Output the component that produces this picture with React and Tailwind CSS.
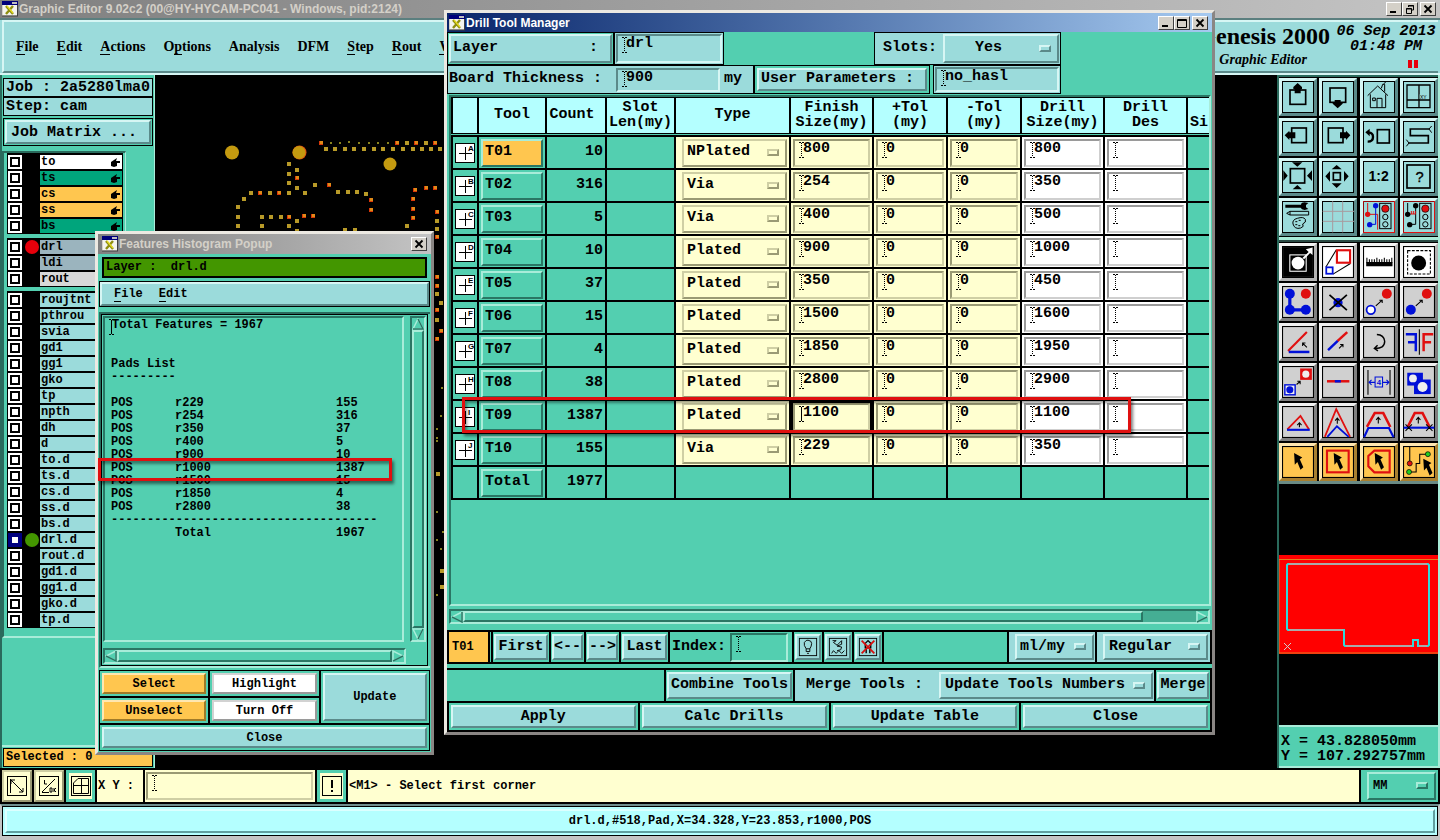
import React from "react";

const MONO = "font-['Liberation_Mono','DejaVu_Sans_Mono',monospace] font-bold";
const SANS = "font-['Liberation_Sans',sans-serif] font-bold";

const UP_BLUE =
  "bg-[#9bdbdb] border-2 border-t-[#d6f6f4] border-l-[#d6f6f4] border-b-[#5b8a8a] border-r-[#5b8a8a]";
const DOWN_BLUE =
  "bg-[#9bdbdb] border-2 border-t-[#5b8a8a] border-l-[#5b8a8a] border-b-[#d6f6f4] border-r-[#d6f6f4]";
const UP_GREEN =
  "bg-[#53cfb0] border-2 border-t-[#a9ecd9] border-l-[#a9ecd9] border-b-[#2a7664] border-r-[#2a7664]";
const DOWN_GREEN =
  "bg-[#53cfb0] border-2 border-t-[#2a7664] border-l-[#2a7664] border-b-[#a9ecd9] border-r-[#a9ecd9]";
const UP_ORANGE =
  "bg-[#ffc64f] border-2 border-t-[#ffe7b0] border-l-[#ffe7b0] border-b-[#a07a28] border-r-[#a07a28]";
const UP_WHITE =
  "bg-white border-2 border-t-[#d2d2d2] border-l-[#d2d2d2] border-b-[#9a9a9a] border-r-[#9a9a9a]";
const UP_CREAM =
  "bg-[#ffffd0] border-2 border-t-[#cfcfa4] border-l-[#cfcfa4] border-b-[#9a9a74] border-r-[#9a9a74]";
const DOWN_CREAM =
  "bg-[#ffffd0] border-2 border-t-[#9a9a74] border-l-[#9a9a74] border-b-[#cfcfa4] border-r-[#cfcfa4]";
const DOWN_WHITE =
  "bg-white border-2 border-t-[#9a9a9a] border-l-[#9a9a9a] border-b-[#cfcfcf] border-r-[#cfcfcf]";

function WinIcon() {
  return (
    <svg width="16" height="16" viewBox="0 0 16 16" className="shrink-0">
      <rect x="0" y="0" width="16" height="15" fill="#d4d0c8" />
      <rect x="0" y="0" width="16" height="4" fill="#00007b" />
      <rect x="10" y="1" width="5" height="2" fill="#c0c0c0" />
      <rect x="1" y="4" width="14" height="10" fill="#f4f4ee" />
      <path d="M4 5L11 13M11 5L4 13" stroke="#8f8f10" strokeWidth="2.4" />
      <path d="M5 5L11 12" stroke="#e8dc20" strokeWidth="1.2" />
      <path d="M0 15H16M15.500 4V15" stroke="#404040" />
    </svg>
  );
}

function WinButton({ label, children }) {
  return (
    <button
      aria-label={label}
      className="flex h-[14px] w-4 items-center justify-center border border-t-white border-l-white border-b-[#404040] border-r-[#404040] bg-[#d4d0c8]"
    >
      <svg width="12" height="10" viewBox="0 0 12 10" fill="none" stroke="#000">
        {children}
      </svg>
    </button>
  );
}
const MinGlyph = <path d="M2 8H8" strokeWidth="2" />;
const MaxGlyph = <path d="M1.500 1.500H10.500V9.500H1.500ZM1 2.500H11" />;
const RestoreGlyph = <path d="M4.500 3V1.500H9.500V6H7.500M4 2H10M2.500 4.500H7.500V9.500H2.500ZM2 5H8" />;
const CloseGlyph = <path d="M2.500 1.500L9.500 8.500M9.500 1.500L2.500 8.500" strokeWidth="1.800" />;

function Caret({ solid }) {
  return (
    <svg width="5" height="16" viewBox="0 0 5 16" className="pointer-events-none absolute left-1 top-px" fill="none" stroke="#000">
      <path d="M0 0.500H2M3 0.500H5M0 15.500H2M3 15.500H5" />
      <path d="M2.500 1V15" strokeDasharray={solid ? undefined : "1 1"} />
    </svg>
  );
}

function Field({ label, value, look, className, solid, size = "text-[15px]" }) {
  return (
    <div className={`relative ${look} ${className}`}>
      <input
        aria-label={label}
        defaultValue={value}
        className={`block h-4 w-full bg-transparent pl-2 leading-4 outline-none ${size}`}
      />
      <Caret solid={solid} />
    </div>
  );
}

function Drop({ label, value, look, className, mark, text = "text-[15px]", pad = "pl-1" }) {
  return (
    <div className={`relative ${look} ${className}`}>
      <select aria-label={label} defaultValue={value} className={`h-full w-full appearance-none bg-transparent outline-none ${text} ${pad}`}>
        <option>{value}</option>
      </select>
      <span className={`pointer-events-none absolute right-1.5 top-1/2 -mt-1 h-[7px] w-3 border-2 ${mark}`} />
    </div>
  );
}
const MARK_BLUE = "border-t-[#d6f6f4] border-l-[#d6f6f4] border-b-[#5b8a8a] border-r-[#5b8a8a] bg-[#9bdbdb]";
const MARK_GREEN = "border-t-[#a9ecd9] border-l-[#a9ecd9] border-b-[#2a7664] border-r-[#2a7664]";
const MARK_CREAM = "border-t-[#cfcfa4] border-l-[#cfcfa4] border-b-[#9a9a74] border-r-[#9a9a74]";

/* ---------- main menu ---------- */
const MENU = [
  ["", "F", "ile"],
  ["", "E", "dit"],
  ["", "A", "ctions"],
  ["O", "p", "tions"],
  ["Analysis", "", ""],
  ["DFM", "", ""],
  ["", "S", "tep"],
  ["", "R", "out"],
  ["", "W", ""],
];

function MenuLabel({ parts }) {
  return (
    <>
      {parts[0]}
      <span className="border-b border-black">{parts[1]}</span>
      {parts[2]}
    </>
  );
}

function MainHeader() {
  return (
    <header>
      <div className="flex h-[18px] items-center bg-linear-to-r from-[#808080] to-[#c4c4c4] pl-0.5 pr-1">
        <WinIcon />
        <h1 className={`${SANS} ml-px flex-1 text-[12px] leading-4 text-[#d4d0c8]`}>
          Graphic Editor 9.02c2 (00@HY-HYCAM-PC041 - Windows, pid:2124)
        </h1>
        <div className="flex">
          <WinButton label="Minimize">{MinGlyph}</WinButton>
          <WinButton label="Restore">{RestoreGlyph}</WinButton>
          <span className="w-0.5" />
          <WinButton label="Close">{CloseGlyph}</WinButton>
        </div>
      </div>
      <div className="border-t-2 border-t-[#5b7f7f] border-b-2 border-b-[#d6f6f4] bg-[#9bdbdb] px-0.5">
        <div className="flex h-[53px] border-t-2 border-l-2 border-t-[#d6f6f4] border-l-[#d6f6f4] border-b-2 border-b-[#5b8a8a]">
          <nav className="flex items-center gap-[18px] pl-3 font-['Liberation_Serif',serif] text-[14px] font-bold leading-4">
            {MENU.map((m) => (
              <button key={m.join("")}>
                <MenuLabel parts={m} />
              </button>
            ))}
          </nav>
          <div className="ml-auto flex">
            <div className="whitespace-nowrap font-['Liberation_Serif',serif] font-bold">
              <p className="text-right text-[24px] leading-[28px]">Genesis 2000</p>
              <p className="pl-[22px] text-[14px] italic leading-5">Graphic Editor</p>
            </div>
            <div className={`${MONO} ml-1 w-[104px] pt-0.5 text-center text-[15px] italic leading-[15px]`}>
              <p>06 Sep 2013</p>
              <p>01:48 PM</p>
              <div className="mt-1.5 flex justify-end gap-0.5 pr-5">
                <span className="h-2 w-1 bg-red-600" />
                <span className="h-2 w-1 bg-red-600" />
              </div>
            </div>
          </div>
        </div>
      </div>
    </header>
  );
}

/* ---------- layer list ---------- */
const LAYER_GROUPS = [
  [
    ["to", "bg-white"],
    ["ts", "bg-[#00a57c]"],
    ["cs", "bg-[#ffc64f]"],
    ["ss", "bg-[#ffc64f]"],
    ["bs", "bg-[#00a57c]"],
  ],
  [
    ["drl", "bg-[#9bb4be]", "bg-red-600"],
    ["ldi", "bg-[#9bb4be]"],
    ["rout", "bg-[#d8d8d8]"],
  ],
  ["roujtnt", "pthrou", "svia", "gd1", "gg1", "gko", "tp", "npth", "dh", "d", "to.d", "ts.d", "cs.d", "ss.d", "bs.d", "drl.d", "rout.d", "gd1.d", "gg1.d", "gko.d", "tp.d"].map(
    (n) => [n, "bg-[#9bdbdb]", n === "drl.d" ? "bg-[#439600]" : undefined]
  ),
];

function Hand() {
  return (
    <svg width="9" height="9" viewBox="0 0 9 9" className="mr-0.5">
      <path d="M0 4L3 2L6 0L5 3H9V5H6V8L3 9L0 8Z" fill="#000" />
    </svg>
  );
}

function LeftPanel() {
  return (
    <aside className={`${MONO} flex w-[155px] flex-col border-l-2 border-r border-l-[#2a6a5c] border-r-[#a9ecd9] bg-[#53cfb0]`}>
      <div className="p-px pt-[3px] text-[15px] leading-[17px]">
        <p className="h-[19px] overflow-hidden border border-black bg-[#9bdbdb] pl-0.5 whitespace-nowrap">Job : 2a5280lma0</p>
        <p className="h-[19px] border border-black bg-[#9bdbdb] pl-0.5">Step: cam</p>
        <div className="mt-0.5 border border-black p-px">
          <button className={`${UP_BLUE} block h-6 w-full pl-1 text-left`}>Job Matrix ...</button>
        </div>
      </div>
      <div className="mt-1 mr-7 border-2 border-r border-t-[#2a6a5c] border-l-[#2a6a5c] border-b-[#a9ecd9] border-r-[#a9ecd9] pb-2">
        <div className="ml-[3px] mr-0.5 flex flex-col gap-1 text-[12px] leading-[14px]">
          {LAYER_GROUPS.map((g, i) => (
            <div key={i} className="border border-b-0 border-black bg-black">
              {g.map(([name, color, dot]) => (
                <label key={name} className="flex h-4 items-center gap-[3px]">
                  <input
                    type="checkbox"
                    className={`h-[14px] w-[14px] shrink-0 appearance-none border-2 bg-white outline-2 -outline-offset-4 ${name === "drl.d" ? "border-[#000080] outline-[#000080]" : "border-white outline-black"}`}
                  />
                  <span className={`h-[14px] w-[14px] shrink-0 rounded-full ${dot || ""}`} />
                  <span className={`-ml-0.5 flex h-[14px] min-w-0 flex-1 items-center justify-between overflow-hidden pl-px ${color}`}>
                    {name}
                    {i === 0 && <Hand />}
                  </span>
                </label>
              ))}
            </div>
          ))}
        </div>
      </div>
      <div className="flex-1 border-b-2 border-b-[#a9ecd9]" />
      <div className="p-px">
        <p className="h-[19px] border border-black bg-[#ffc64f] pl-0.5 text-[12px] leading-[17px]">Selected : 0</p>
      </div>
    </aside>
  );
}

/* ---------- board canvas ---------- */
const GOLD = [
  [407, 143], [426, 143], [326, 149], [335, 149], [345, 149], [354, 149], [364, 149], [374, 149], [383, 149], [393, 149], [403, 149],
  [413, 149], [422, 149], [431, 149], [440, 149], [289, 164], [289, 174], [297, 170], [289, 183], [297, 188], [251, 193], [270, 193],
  [289, 193], [305, 193], [315, 185], [338, 192], [348, 192], [357, 192], [366, 194], [244, 199], [238, 207], [238, 217], [238, 226],
  [262, 217], [271, 217], [281, 217], [297, 221], [262, 226], [289, 226], [297, 231], [345, 230], [355, 230], [407, 226], [437, 221],
  [437, 229], [437, 294], [441, 303], [437, 320], [438, 474], [442, 571], [442, 587],
];
const HOT = [
  [321, 143], [397, 143], [416, 143], [435, 143], [297, 178], [260, 193], [279, 193], [329, 185], [371, 200], [371, 210], [289, 217],
  [304, 216], [313, 216], [415, 190], [426, 188], [435, 188], [413, 199], [413, 209], [413, 218], [437, 212], [437, 237], [437, 277],
  [437, 286], [437, 310], [441, 331], [437, 339],
];
const TINY = [
  [331, 143], [340, 143], [349, 142], [359, 143], [369, 143], [378, 143], [388, 143], [442, 388], [441, 416], [437, 429], [437, 438],
  [437, 441], [437, 512], [443, 532], [437, 540], [441, 549], [437, 595],
];

function Board() {
  return (
    <main className="min-w-0 flex-1 overflow-hidden bg-black">
      <svg width="300" height="560" viewBox="155 75 300 560" role="img" aria-label="Board view">
        <circle cx="232" cy="152.500" r="7" fill="#c49a10" />
        <circle cx="299.500" cy="152.500" r="7" fill="#e05010" />
        <circle cx="299" cy="152.500" r="6.500" fill="#c49a10" />
        <circle cx="390" cy="164" r="6.500" fill="#c49a10" />
        {GOLD.map(([x, y]) => (
          <rect key={`${x}-${y}`} x={x - 2} y={y - 2} width="4" height="4" fill="#b89a28" />
        ))}
        {HOT.map(([x, y]) => (
          <g key={`${x}-${y}`}>
            <rect x={x - 2} y={y - 2} width="4" height="4" fill="#d83808" />
            <rect x={x - 1} y={y - 2} width="3" height="3" fill="#e08a18" />
          </g>
        ))}
        {TINY.map(([x, y]) => (
          <rect key={`${x}-${y}`} x={x - 1} y={y - 1} width="2" height="2" fill="#8a8420" />
        ))}
      </svg>
    </main>
  );
}

/* ---------- tool palettes ---------- */
const K = "#000";
const R = "#e01010";
const B = "#0010d8";

const VIEW_TOOLS = [
  ["Zoom up", <><rect x="272" y="273" width="47" height="43" fill="none" stroke={K} strokeWidth="5" /><path d="M295 252L308 264V270H304V283H286V270H282V264Z" /></>],
  ["Zoom down", <><rect x="392" y="267" width="47" height="43" fill="none" stroke={K} strokeWidth="5" /><path d="M415 328L430 314V310H424V303H406V310H400V314Z" /></>],
  ["Home", <g fill="none" stroke={K} strokeWidth="3"><path d="M502 290L532 261L563 290M510 286V326H556V286M530 326V298H545V326M517 297H525V305H517ZM543 268L547 256H553V278M550 254L556 250" /></g>],
  ["Coordinates", <><path d="M620 258H689V326H620ZM656 258V326M620 303H689" fill="none" stroke={K} strokeWidth="4" /><rect x="658" y="286" width="26" height="14" fill="#9bdbdb" /><text x="659" y="299" fontSize="15" fontFamily="Liberation Sans">XY</text></>],
  ["Pan left", <><rect x="277" y="387" width="44" height="44" fill="none" stroke={K} strokeWidth="5" /><path d="M256 409L270 395V400H288V418H270V423Z" /></>],
  ["Pan right", <><rect x="387" y="387" width="44" height="44" fill="none" stroke={K} strokeWidth="5" /><path d="M453 409L440 395V400H422V418H440V423Z" /></>],
  ["Previous view", <><rect x="531" y="392" width="36" height="40" fill="none" stroke={K} strokeWidth="5" /><path d="M505 401Q518 401 518 414Q518 428 502 428" fill="none" stroke={K} strokeWidth="7" /><path d="M495 400L508 389V412Z" /></>],
  ["Serpentine", <g fill="none" stroke={K}><path d="M687 390H630V410H684V432H625" strokeWidth="5" /><path d="M694 381L686 390L694 401M618 422L626 432L618 442" strokeWidth="3" /></g>],
  ["Zoom in", <><rect x="273" y="509" width="43" height="43" fill="none" stroke={K} strokeWidth="5" /><path d="M278 490L294 503L309 490ZM280 571L294 558L308 571ZM252 514L265 530L252 546ZM338 514L323 530L338 546Z" /></>],
  ["Zoom out", <><rect x="402" y="521" width="21" height="22" fill="none" stroke={K} strokeWidth="5" /><path d="M397 511L412 498L427 511ZM397 553L412 567L427 553ZM392 516L378 532L392 548ZM434 516L448 532L434 548Z" /></>],
  ["Scale 1:2", <text x="535" y="547" textAnchor="middle" fontSize="42" fontWeight="bold" fontFamily="Liberation Sans">1:2</text>],
  ["Help", <><rect x="620" y="498" width="69" height="69" fill="none" stroke={K} strokeWidth="5" /><text x="658" y="549" textAnchor="middle" fontSize="44" fontFamily="Liberation Sans" stroke={K} strokeWidth="1">?</text></>],
  ["Settings", <><path d="M258 617H305Q306 610 316 610L327 612L320 618V625L327 630L316 633Q306 632 304 626H258Z" /><path d="M262 643L272 637H328V648H272ZM272 637V648" fill="none" stroke={K} strokeWidth="3" /><path d="M281 675Q278 662 294 658Q312 652 318 661Q322 670 310 675Q316 683 304 687Q286 692 281 675Z" fill="none" stroke={K} strokeWidth="3" /><path d="M288 668H294M298 664H304M288 677H294M297 680H303" stroke={K} strokeWidth="3" /></>],
  ["Grid", <path d="M400 607V700M430 607V700M370 637H464M370 667H464" stroke="#a89a9e" strokeWidth="3" />],
  ["Snap on", <><rect x="487" y="605" width="97" height="97" fill="none" stroke={R} strokeWidth="6" /><path d="M502 612V646H532V692" stroke={R} strokeWidth="3" fill="none" /><path d="M526 620V676H510" stroke={B} strokeWidth="3" fill="none" /><circle cx="502" cy="646" r="8" fill={R} /><circle cx="526" cy="620" r="8" fill={B} /><circle cx="508" cy="677" r="8" fill={B} /><rect x="538" y="613" width="34" height="76" fill="none" stroke={K} strokeWidth="3" /><circle cx="555" cy="629" r="11" fill={R} stroke={K} strokeWidth="2" /><circle cx="555" cy="654" r="8" fill="none" stroke={K} strokeWidth="3" /><circle cx="555" cy="676" r="8" fill="none" stroke={K} strokeWidth="3" /></>],
  ["Snap off", <><rect x="607" y="605" width="97" height="97" fill="none" stroke={R} strokeWidth="6" /><path d="M622 612V646H630M646 620V676H628" stroke={K} strokeWidth="3" fill="none" /><path d="M630 645H646M633 636V645M639 636V645M645 636V645" stroke={R} strokeWidth="3" /><circle cx="622" cy="646" r="8" /><circle cx="646" cy="620" r="8" /><circle cx="628" cy="677" r="8" /><rect x="658" y="613" width="34" height="76" fill="none" stroke={K} strokeWidth="3" /><circle cx="675" cy="629" r="11" fill={R} stroke={K} strokeWidth="2" /><circle cx="675" cy="654" r="8" fill="none" stroke={K} strokeWidth="3" /><circle cx="675" cy="676" r="8" fill="none" stroke={K} strokeWidth="3" /></>],
];

function Arrow({ x1, y1, x2, y2 }) {
  const dx = Math.sign(x2 - x1) * 8;
  const dy = Math.sign(y2 - y1) * 8;
  const head = dx === 0 ? `M${x2 - 6} ${y2 + 7}L${x2} ${y2}L${x2 + 6} ${y2 + 7}` : `M${x2 - dx} ${y2}H${x2}V${y2 - dy}`;
  return <path d={`M${x1} ${y1}L${x2} ${y2}${head}`} fill="none" stroke={K} strokeWidth="3" />;
}
function Pointer({ x, y }) {
  return <path transform={`translate(${x} ${y})`} d="M0 0L23 12L16 17L26 40L18 47L9 25L2 33Z" />;
}

const EDIT_TOOLS = [
  ["Select inside", <><rect x="42" y="36" width="84" height="84" /><rect x="61" y="58" width="46" height="46" fill="none" stroke="#fff" strokeWidth="3" /><circle cx="84" cy="81" r="18" fill="#fff" /><path d="M97 66L114 50L106 42L125 37V58L118 53L101 70Z" fill="#fff" /></>],
  ["Resize", <><path d="M170 92L199 44M190 112L239 82" stroke={K} strokeWidth="3" /><rect x="201" y="45" width="37" height="35" fill="#fff" stroke={R} strokeWidth="6" /><rect x="171" y="93" width="18" height="18" fill="#fff" stroke={B} strokeWidth="5" /></>],
  ["Measure", <><rect x="288" y="78" width="74" height="12" /><path d="M290 66V80M297 70V80M304 70V80M311 70V80M318 66V80M325 70V80M332 70V80M339 66V80M346 70V80M353 70V80M360 66V80" stroke={K} strokeWidth="3" /></>],
  ["Pad", <><rect x="412" y="46" width="64" height="66" fill="none" stroke={K} strokeWidth="3" strokeDasharray="8 4" /><circle cx="443" cy="81" r="21" /></>],
  ["Connect", <><path d="M61 175V220H106" stroke={B} strokeWidth="9" fill="none" /><circle cx="61" cy="175" r="14" fill={B} /><circle cx="61" cy="220" r="14" fill={B} /><circle cx="106" cy="220" r="14" fill={B} /><circle cx="106" cy="175" r="14" fill={R} /></>],
  ["Delete", <><circle cx="204" cy="200" r="13" fill={B} /><path d="M180 178L229 221M229 178L180 221" stroke={K} strokeWidth="5" /></>],
  ["Copy", <><circle cx="301" cy="220" r="12" fill="#fff" stroke={B} strokeWidth="5" /><circle cx="346" cy="175" r="14" fill={R} /><Arrow x1={315} y1={209} x2={333} y2={193} /></>],
  ["Move", <><circle cx="421" cy="220" r="14" fill={B} /><circle cx="466" cy="175" r="14" fill={R} /><Arrow x1={435} y1={209} x2={453} y2={193} /></>],
  ["Rotate line", <><path d="M56 343L109 290" stroke={R} strokeWidth="6" /><path d="M58 346H116" stroke={B} strokeWidth="7" /><Arrow x1={109} y1={333} x2={97} y2={321} /></>],
  ["Extend line", <><path d="M176 341L204 314" stroke={B} strokeWidth="7" /><path d="M203 315L230 290" stroke={R} strokeWidth="7" /><Arrow x1={207} y1={336} x2={218} y2={325} /></>],
  ["Rotate", <path d="M318 297Q338 298 340 316Q340 337 311 336M320 327L311 336L321 343" fill="none" stroke={K} strokeWidth="4" />],
  ["Mirror", <><path d="M445 282V354" stroke={K} strokeWidth="3" /><path d="M407 296H435V344M435 319H413" fill="none" stroke={B} strokeWidth="7" /><path d="M484 296H457V344M457 319H478" fill="none" stroke={R} strokeWidth="7" /></>],
  ["Swap symbol", <><rect x="90" y="400" width="33" height="32" fill={R} /><circle cx="106" cy="416" r="10" fill="#eee" /><rect x="47" y="446" width="29" height="28" fill="#eee" stroke={B} strokeWidth="4" /><circle cx="61" cy="460" r="10" fill={B} /><Arrow x1={80} y1={445} x2={90} y2={436} /></>],
  ["Join", <><path d="M173 436H236" stroke={R} strokeWidth="7" /><path d="M195 436H212" stroke={B} strokeWidth="7" /></>],
  ["Spacing", <><path d="M293 404V474M355 404V474" stroke={K} strokeWidth="3" /><path d="M296 439H313M334 439H352M303 432L296 439L303 446M345 432L352 439L345 446M313 424H334V452H313Z" fill="none" stroke={B} strokeWidth="3" /><text x="324" y="447" textAnchor="middle" fontSize="22" fontWeight="bold" fill={B} fontFamily="Liberation Sans">4</text></>],
  ["Merge shapes", <><rect x="411" y="412" width="44" height="36" fill={B} /><rect x="430" y="431" width="47" height="41" fill={B} /><circle cx="427" cy="428" r="11" fill="#eee" /><circle cx="454" cy="452" r="14" fill="#eee" /></>],
  ["Triangle", <><path d="M54 579L91 541L115 579" fill="none" stroke={R} strokeWidth="5" /><path d="M53 580H117" stroke={B} strokeWidth="6" /><Arrow x1={88} y1={573} x2={88} y2={560} /></>],
  ["Peak", <><path d="M167 600L199 522L238 600" fill="none" stroke={R} strokeWidth="5" /><path d="M174 600L201 570L234 600" fill="none" stroke={B} strokeWidth="5" /><Arrow x1={202} y1={563} x2={202} y2={547} /></>],
  ["Trapezoid", <><path d="M290 572L312 533H336L356 572" fill="none" stroke={R} strokeWidth="7" /><path d="M282 601L294 575H352L365 601" fill="none" stroke={B} strokeWidth="6" /><Arrow x1={322} y1={562} x2={322} y2={545} /></>],
  ["Trapezoid cut", <><path d="M412 572L432 533H454L474 572" fill="none" stroke={R} strokeWidth="7" /><path d="M401 574H487" stroke={B} strokeWidth="6" /><path d="M406 565L424 583M424 565L406 583M464 565L482 583M482 565L464 583" stroke={K} strokeWidth="3" /><Arrow x1={442} y1={562} x2={442} y2={545} /></>],
  ["Pick", <Pointer x={73} y={653} />],
  ["Pick in rectangle", <><rect x="173" y="646" width="61" height="61" fill="none" stroke={R} strokeWidth="6" /><Pointer x={192} y={653} /></>],
  ["Pick in polygon", <><path d="M311 646H354V707H311L294 690V661Z" fill="none" stroke={R} strokeWidth="6" /><Pointer x={312} y={653} /></>],
  ["Pick net", <><path d="M418 634V682M416 706H436V682H446V656H468" fill="none" stroke={K} strokeWidth="3" /><circle cx="418" cy="682" r="7" fill={R} stroke={K} strokeWidth="2" /><circle cx="416" cy="706" r="7" fill="#20d020" stroke={K} strokeWidth="2" /><circle cx="469" cy="656" r="7" fill="#20d020" stroke={K} strokeWidth="2" /><Pointer x={456} y={669} /></>],
];

function ViewTool({ label, index, children }) {
  const x = 248 + 120 * (index % 4);
  const y = 246 + 120 * Math.floor(index / 4);
  return (
    <button aria-label={label} className="h-[38px] w-[38px] border-3 border-t-[#d6f6f4] border-l-[#d6f6f4] border-b-[#5b8a8a] border-r-[#5b8a8a] bg-[#9bdbdb]">
      <svg width="32" height="32" viewBox={`${x} ${y} 96 96`} className="block">
        <rect x={x + 1.5} y={y + 1.5} width="93" height="93" fill="none" stroke="#000" strokeWidth="3" />
        {children}
      </svg>
    </button>
  );
}

function EditTool({ label, index, children }) {
  const row = Math.floor(index / 4);
  const x = 39 + 120 * (index % 4);
  const y = 33 + 120 * row;
  const look =
    row === 0
      ? "bg-white border-t-[#f4f4f4] border-l-[#f4f4f4] border-b-[#b4b4b4] border-r-[#b4b4b4]"
      : row === 5
        ? "bg-[#ffc64f] border-t-[#ffe7b0] border-l-[#ffe7b0] border-b-[#a88030] border-r-[#a88030]"
        : "bg-[#d0d0d0] border-t-[#f0f0f0] border-l-[#f0f0f0] border-b-[#808080] border-r-[#808080]";
  return (
    <button aria-label={label} className={`flex h-[38px] w-[38px] items-center justify-center border-3 ${look}`}>
      <svg width="32" height="32" viewBox={`${x} ${y} 90 90`}>
        <rect x={x + 1.5} y={y + 1.5} width="87" height="87" fill="none" stroke="#000" strokeWidth="3" />
        {children}
      </svg>
    </button>
  );
}

function RightPanel() {
  return (
    <aside className="flex w-[163px] flex-col border-l-2 border-r-2 border-l-[#2a6a5c] border-r-[#a9ecd9] bg-black">
      <div className="border-t-2 border-b-3 border-t-[#2a6a5c] border-b-[#a9ecd9] py-px">
        <div className="grid grid-cols-4 gap-0.5">
          {VIEW_TOOLS.map(([label, art], i) => (
            <ViewTool key={label} label={label} index={i}>{art}</ViewTool>
          ))}
        </div>
      </div>
      <div className="border-t-2 border-b-3 border-t-[#2a4a44] border-b-[#6a8a84] pt-px">
        <div className="grid grid-cols-4 gap-0.5">
          {EDIT_TOOLS.map(([label, art], i) => (
            <EditTool key={label} label={label} index={i}>{art}</EditTool>
          ))}
        </div>
      </div>
      <div className="min-h-0 flex-1 overflow-hidden bg-black">
        <svg width="160" height="240" viewBox="1279 484 160 240" role="img" aria-label="Overview">
          <rect x="1278" y="555" width="162" height="99" fill="#f00" />
          <path d="M1278 559.500H1439M1278 653H1439M1279 559V653" stroke="#e08020" fill="none" />
          <path d="M1288 564H1428L1429 565V645L1428 646H1418V640H1413V646H1345L1344 645V630H1288L1287 629V565Z" fill="none" stroke="#30dada" strokeWidth="2" />
          <path d="M1289 564H1427M1289 630H1343M1346 646H1412M1419 646H1427" stroke="#aaa" strokeWidth="2" />
          <path d="M1284 643L1291 650M1291 643L1284 650" stroke="#ccc" />
        </svg>
      </div>
      <div className={`${MONO} h-[43px] border-t-2 border-b-2 border-t-[#a9ecd9] border-b-[#a9ecd9] bg-[#53cfb0] pt-[7px] pl-0.5 text-[15px] leading-[15px] whitespace-nowrap`}>
        <p>X = 43.828050mm</p>
        <p>Y = 107.292757mm</p>
      </div>
    </aside>
  );
}

/* ---------- bottom bars ---------- */
function BoxIcon({ children, size = 22 }) {
  return (
    <svg width={size} height={size} viewBox="0 0 22 22" fill="none" stroke="#000" className="shrink-0">
      <rect x="1.500" y="1.500" width="19" height="19" />
      {children}
    </svg>
  );
}

function BottomBars() {
  return (
    <footer className={`${MONO} text-[12px]`}>
      <div className="flex h-9 items-stretch gap-0.5 border-t-2 border-b-2 border-black bg-black pl-0.5 pr-0.5">
        <button aria-label="Diagonal" className={`${UP_CREAM} flex w-[30px] items-center justify-center`}>
          <BoxIcon><path d="M5 5L17 17M5 9V5H9M17 13V17H13M4.500 4V18" /></BoxIcon>
        </button>
        <button aria-label="Angle" className={`${UP_CREAM} flex w-[30px] items-center justify-center`}>
          <BoxIcon><path d="M4 17L17 4M4 17.500H11M6.500 5V9H9M12 13H14V17H12ZM16 13V17M18 13L16 15L18 17" /></BoxIcon>
        </button>
        <button aria-label="Snap grid" className="flex w-[29px] items-center justify-center border-3 border-[#53cfb0] bg-[#ffffd0]">
          <BoxIcon><path d="M3.500 8L8 3.500H18.500V18.500H3.500ZM11.500 3V19M3 10.500H19" /></BoxIcon>
        </button>
        <label htmlFor="xy" className="flex w-[46px] items-center bg-[#ffffd0] pl-px whitespace-pre">X Y :</label>
        <div className="bg-[#ffffd0] py-0.5 pl-px pr-0.5">
          <div className={`${DOWN_CREAM} relative h-full w-[167px]`}>
            <input id="xy" className="h-full w-full bg-transparent pl-3 outline-none" />
            <Caret />
          </div>
        </div>
        <button aria-label="Alert" className="flex w-[29px] items-center justify-center border-3 border-[#53cfb0] bg-[#ffffd0]">
          <BoxIcon><path d="M11 5V13M11 15V17" strokeWidth="2" /></BoxIcon>
        </button>
        <p className="flex flex-1 items-center bg-[#ffffd0] pl-px">&lt;M1&gt; - Select first corner</p>
        <div className="w-[77px] bg-[#53cfb0] py-0.5 pl-1.5 pr-0.5">
          <Drop label="Units" value="MM" look={UP_GREEN} className="h-full" mark={MARK_GREEN} text="text-[12px]" />
        </div>
      </div>
      <div className="border-2 border-[#c4c4c4] border-t-[#6f8f8f] border-b-4">
        <div className="border border-black bg-[#b4ffff] p-0.5">
          <p className="h-6 border-2 border-t-[#dcffff] border-l-[#dcffff] border-b-[#5f9f9f] border-r-[#5f9f9f] text-center leading-5">
            drl.d,#518,Pad,X=34.328,Y=23.853,r1000,POS
          </p>
        </div>
      </div>
    </footer>
  );
}

/* ---------- histogram popup ---------- */
const HIST = [
  ["r229", 155], ["r254", 316], ["r350", 37], ["r400", 5], ["r900", 10], ["r1000", 1387], ["r1500", 15], ["r1850", 4], ["r2800", 38],
];

function ScrollArrow({ dir }) {
  const d = {
    left: "M11 1L1 6L11 11Z",
    right: "M1 1L11 6L1 11Z",
    up: "M1 11L6 1L11 11Z",
    down: "M1 1H11L6 11Z",
  }[dir];
  return (
    <svg width="12" height="12" viewBox="0 0 12 12" className="shrink-0">
      <path d={d} fill="#53cfb0" stroke="#a9ecd9" strokeWidth="1.500" />
      {dir === "left" && <path d="M1 6L11 11V1" stroke="#2a7664" strokeWidth="1.500" fill="none" />}
      {dir === "up" && <path d="M6 1L11 11H1" stroke="#2a7664" strokeWidth="1.500" fill="none" />}
      {dir === "right" && <path d="M11 6L1 11" stroke="#2a7664" strokeWidth="1.500" />}
      {dir === "down" && <path d="M11 1L6 11" stroke="#2a7664" strokeWidth="1.500" />}
    </svg>
  );
}

const WINDOW = "border-3 border-t-[#ece9e2] border-l-[#ece9e2] border-b-[#8a8684] border-r-[#8a8684] bg-[#53cfb0]";

function Histogram() {
  return (
    <section aria-label="Features Histogram Popup" className={`${WINDOW} ${MONO} absolute left-[95px] top-[231px] flex h-[524px] w-[339px] flex-col text-[12px]`}>
      <div className="flex h-5 items-center bg-linear-to-r from-[#808080] to-[#c4c4c4] pl-1 pr-1">
        <WinIcon />
        <h2 className={`${SANS} ml-px flex-1 text-[12px] text-[#d4d0c8]`}>Features Histogram Popup</h2>
        <WinButton label="Close">{CloseGlyph}</WinButton>
      </div>
      <div className="mx-1 mt-[3px] h-[21px] border-2 border-black bg-[#439600] pl-0.5 leading-4 whitespace-pre">Layer :  drl.d</div>
      <div className="mx-px mt-[3px] border border-black">
        <div className={`${UP_BLUE} flex h-6 items-center gap-4 pl-3 leading-4`}>
          <button><MenuLabel parts={["", "F", "ile"]} /></button>
          <button><MenuLabel parts={["", "E", "dit"]} /></button>
        </div>
      </div>
      <div className="mx-px mt-[5px] flex-1 border-2 border-t-[#2a6a5c] border-l-[#2a6a5c] border-r-0 border-b-[#a9ecd9] pr-0.5">
        <div className="flex h-full flex-col border border-black p-px">
          <div className="flex flex-1 gap-1.5">
            <div className={`${DOWN_GREEN} relative flex-1 pl-1.5 leading-[13px]`}>
              <p className="mt-px pl-px">Total Features = 1967</p>
              <p className="mt-[26px]">Pads List</p>
              <p>---------</p>
              <table className="mt-[13px] text-left">
                <tbody>
                  {HIST.map(([s, n]) => (
                    <tr key={s}>
                      <td className="w-16 p-0">POS</td>
                      <td className="w-[161px] p-0">{s}</td>
                      <td className="p-0">{n}</td>
                    </tr>
                  ))}
                  <tr>
                    <td colSpan="3" className="p-0 whitespace-nowrap">-------------------------------------</td>
                  </tr>
                  <tr>
                    <td className="p-0" />
                    <td className="p-0">Total</td>
                    <td className="p-0">1967</td>
                  </tr>
                </tbody>
              </table>
              <Caret solid />
            </div>
            <div className={`${DOWN_GREEN} flex w-4 flex-col items-center`}>
              <ScrollArrow dir="up" />
              <div className={`${UP_GREEN} w-3 flex-1`} />
              <ScrollArrow dir="down" />
            </div>
          </div>
          <div className={`${DOWN_GREEN} mt-1.5 mr-5 flex h-4 items-center`}>
            <ScrollArrow dir="left" />
            <div className={`${UP_GREEN} h-3 flex-1`} />
            <ScrollArrow dir="right" />
          </div>
        </div>
      </div>
      <div className="mx-px mb-px mt-0.5 grid grid-cols-3 gap-0.5 border border-black bg-black leading-4">
        <div className="bg-[#53cfb0] p-0.5"><button className={`${UP_ORANGE} h-[21px] w-full leading-4`}>Select</button></div>
        <div className="bg-[#53cfb0] p-0.5"><button className={`${UP_WHITE} h-[21px] w-full leading-4`}>Highlight</button></div>
        <div className="row-span-2 bg-[#53cfb0] p-0.5"><button className={`${UP_BLUE} h-full w-full`}>Update</button></div>
        <div className="bg-[#53cfb0] p-0.5"><button className={`${UP_ORANGE} h-[21px] w-full leading-4`}>Unselect</button></div>
        <div className="bg-[#53cfb0] p-0.5"><button className={`${UP_WHITE} h-[21px] w-full leading-4`}>Turn Off</button></div>
        <div className="col-span-3 bg-[#53cfb0] p-0.5"><button className={`${UP_BLUE} h-[21px] w-full leading-4`}>Close</button></div>
      </div>
    </section>
  );
}

/* ---------- drill tool manager ---------- */
const TOOLS = [
  ["T01", 10, "NPlated", 800, 800, "A"],
  ["T02", 316, "Via", 254, 350, "B"],
  ["T03", 5, "Via", 400, 500, "C"],
  ["T04", 10, "Plated", 900, 1000, "D"],
  ["T05", 37, "Plated", 350, 450, "E"],
  ["T06", 15, "Plated", 1500, 1600, "F"],
  ["T07", 4, "Plated", 1850, 1950, "G"],
  ["T08", 38, "Plated", 2800, 2900, "H"],
  ["T09", 1387, "Plated", 1100, 1100, "I"],
  ["T10", 155, "Via", 229, 350, "J"],
];
const TD = "border-r-2 border-b-2 border-black p-0";
const COLS = ["w-7", "w-[68px]", "w-[60px]", "w-[69px]", "w-[115px]", "w-[83px]", "w-[74px]", "w-[74px]", "w-[83px]", "w-[83px]", "w-[80px]"];
const HEADS = [[""], ["Tool"], ["Count"], ["Slot", "Len(my)"], ["Type"], ["Finish", "Size(my)"], ["+Tol", "(my)"], ["-Tol", "(my)"], ["Drill", "Size(my)"], ["Drill", "Des"], ["", "Si"]];

function DrillTable() {
  return (
    <table className="w-[816px] table-fixed border-separate border-spacing-0 text-[15px]">
      <colgroup>
        {COLS.map((c, i) => (
          <col key={i} className={c} />
        ))}
      </colgroup>
      <thead>
        <tr className="h-[37px] bg-[#b4ffff] leading-[15px]">
          {HEADS.map((h, i) => (
            <th key={i} className={`border-r-2 border-t border-b border-black p-0 pb-0.5 font-bold whitespace-nowrap ${i === 0 ? "border-l-2" : ""} ${i === 10 ? "pl-0.5 text-left" : ""} ${i === 2 ? "pr-2" : ""}`}>
              {h.map((line, j) => (
                <div key={j} className="min-h-[15px]">{line}</div>
              ))}
            </th>
          ))}
        </tr>
      </thead>
      <tbody>
        <tr><td colSpan="11" className="h-[3px] border-b-2 border-black p-0" /></tr>
        {TOOLS.map(([tool, count, type, finish, drill, mark], i) => (
          <tr key={tool} className="h-[33px]">
            <td className={`${TD} border-l-2`}>
              <svg width="20" height="20" viewBox="0 0 20 20" className="ml-0.5 block" stroke="#000" fill="none">
                <rect x="0.500" y="0.500" width="19" height="19" fill="#fff" />
                <path d="M4 10.500H17M10.500 4V17" />
                <text x="13" y="8" fontSize="8" fill="#000" stroke="none" fontFamily="Liberation Sans">{mark}</text>
              </svg>
            </td>
            <td className={TD}>
              <button className={`${i === 0 ? "bg-[#ffc64f] border-2 border-t-[#a9ecd9] border-l-[#a9ecd9] border-b-[#2a7664] border-r-[#2a7664]" : UP_GREEN} mx-auto block h-7 w-[62px] pl-0.5 text-left`}>{tool}</button>
            </td>
            <td className={`${TD} pr-0.5 text-right`}>{count}</td>
            <td className={TD} />
            <td className={`${TD} bg-[#ffffd0]`}>
              <Drop label={`${tool} type`} value={type} look={UP_CREAM} className="ml-1.5 mr-0.5 h-7" mark={MARK_CREAM} pad="pl-[3px]" />
            </td>
            <td className={`${TD} bg-[#ffffd0]`}>
              <Field label={`${tool} finish size`} value={finish} look={DOWN_CREAM} solid={i === 8} className={`mx-0.5 h-7 ${i === 8 ? "outline-2 outline-black" : ""}`} />
            </td>
            <td className={`${TD} bg-[#ffffd0]`}><Field label={`${tool} plus tolerance`} value="0" look={DOWN_CREAM} className="mx-0.5 h-7" /></td>
            <td className={`${TD} bg-[#ffffd0]`}><Field label={`${tool} minus tolerance`} value="0" look={DOWN_CREAM} className="mx-0.5 h-7" /></td>
            <td className={`${TD} bg-white`}><Field label={`${tool} drill size`} value={drill} look={DOWN_WHITE} className="mx-0.5 h-7" /></td>
            <td className={`${TD} bg-white`}><Field label={`${tool} designator`} value="" look={DOWN_WHITE} className="mx-0.5 h-7" /></td>
            <td className={TD} />
          </tr>
        ))}
        <tr className="h-[33px]">
          <td className={`${TD} border-l-2`} />
          <td className={TD}><button className={`${UP_GREEN} mx-auto block h-7 w-[62px] pl-0.5 text-left`}>Total</button></td>
          <td className={`${TD} pr-0.5 text-right`}>1977</td>
          {[0, 1, 2, 3, 4, 5, 6, 7].map((n) => (
            <td key={n} className={TD} />
          ))}
        </tr>
      </tbody>
    </table>
  );
}

function Nav({ children, label, width }) {
  return (
    <div className="bg-[#53cfb0] px-px py-0.5">
      <button aria-label={label} className={`${UP_BLUE} flex h-full items-center justify-center whitespace-nowrap ${width}`}>{children}</button>
    </div>
  );
}

function DrillManager() {
  return (
    <section aria-label="Drill Tool Manager" className={`${WINDOW} ${MONO} absolute left-[444px] top-[10px] flex h-[725px] w-[771px] flex-col text-[15px]`}>
      <div className="flex h-[19px] shrink-0 items-center bg-linear-to-r from-[#0a246a] to-[#a6caf0] pl-0.5 pr-1">
        <WinIcon />
        <h2 className={`${SANS} ml-px flex-1 text-[12px] text-white`}>Drill Tool Manager</h2>
        <div className="flex">
          <WinButton label="Minimize">{MinGlyph}</WinButton>
          <WinButton label="Maximize">{MaxGlyph}</WinButton>
          <span className="w-0.5" />
          <WinButton label="Close">{CloseGlyph}</WinButton>
        </div>
      </div>

      <div className="flex h-[33px] shrink-0">
        <div className="w-[167px] border border-black p-px">
          <button className={`${UP_BLUE} flex h-full w-full items-center justify-between pl-0.5 pr-3`}><span>Layer</span><span>:</span></button>
        </div>
        <div className="w-[110px] border border-black bg-[#9bdbdb] p-px">
          <Field label="Layer" value="drl" look={DOWN_BLUE} className="h-full" />
        </div>
        <div className="ml-auto mr-[151px] flex w-[187px] items-center border border-black bg-[#9bdbdb] py-px pl-2 pr-px">
          <span>Slots:</span>
          <Drop label="Slots" value="Yes" look={UP_BLUE} className="ml-1.5 h-full flex-1" mark={MARK_BLUE} pad="pl-[30px]" />
        </div>
      </div>
      <div className="flex h-[29px] shrink-0">
        <div className="flex w-[307px] items-center border border-black bg-[#9bdbdb] pl-px">
          <label htmlFor="thickness" className="w-[167px] whitespace-nowrap">Board Thickness :</label>
          <div className={`${DOWN_BLUE} relative h-6 w-[104px]`}>
            <input id="thickness" defaultValue="900" className="block h-4 w-full bg-transparent pl-2 leading-4 outline-none" />
            <Caret />
          </div>
          <span className="ml-1">my</span>
        </div>
        <div className="w-[176px] border border-black p-0.5">
          <button className={`${UP_BLUE} flex h-full w-full items-center pl-0.5 whitespace-nowrap`}>User Parameters :</button>
        </div>
        <div className="ml-[3px] w-[128px] border border-black bg-[#9bdbdb] p-px">
          <Field label="User parameters" value="no_hasl" look={DOWN_BLUE} className="h-full" />
        </div>
      </div>

      <div className={`${DOWN_GREEN} ml-0.5 mr-px mt-px min-h-0 flex-1 overflow-hidden`}>
        <DrillTable />
      </div>
      <div className={`${DOWN_GREEN} mx-0.5 mt-[3px] mb-1.5 flex h-[15px] shrink-0 items-center`}>
        <ScrollArrow dir="left" />
        <div className={`${UP_GREEN} h-[11px] flex-1`} />
        <div className="h-[11px] w-[53px] bg-[#45ae94]" />
        <ScrollArrow dir="right" />
      </div>

      <div className="mb-1 flex h-[34px] shrink-0 gap-0.5 border-y-2 border-black bg-black px-0.5">
        <p className="w-[39px] bg-[#ffc64f] pl-[3px] text-[12px] leading-[30px]">T01</p>
        <span className="w-px bg-[#53cfb0]" />
        <Nav width="w-[54px]">First</Nav>
        <Nav width="w-[31px]">&lt;--</Nav>
        <Nav width="w-[31px]">--&gt;</Nav>
        <Nav width="w-[45px]">Last</Nav>
        <div className="flex w-[122px] items-center bg-[#53cfb0] pl-0.5">
          <label htmlFor="tool-index">Index:</label>
          <div className={`${DOWN_GREEN} relative ml-1 h-[29px] w-[58px]`}>
            <input id="tool-index" className="block h-4 w-full bg-transparent pl-2 leading-4 outline-none" />
            <Caret />
          </div>
        </div>
        <Nav label="Light" width="w-[26px]"><BoxIcon size={20}><path d="M9 13Q6 9 7 6Q9 3 11 3.500Q15 4 15 7Q15 10 13 13ZM9 13V16H13V13M10 18H12" /></BoxIcon></Nav>
        <Nav label="Snake" width="w-[26px]"><BoxIcon size={20}><path d="M5 4H9L6 6L10 9L15 4V8L10 10L15 11L14 14L10 15M4 18L6 15L9 18L12 15L15 18L18 15" /></BoxIcon></Nav>
        <Nav label="Remove" width="w-[26px]"><BoxIcon size={20}><path d="M8 7L11 4L14 7V12H8ZM9 13V18M13 13V18" strokeWidth="1.500" /><path d="M4 4L18 18M18 4L4 18" stroke="#d81010" strokeWidth="2" /></BoxIcon></Nav>
        <div className="flex-1 bg-[#53cfb0]" />
        <div className="w-[86px] bg-[#9bdbdb] py-0.5 pl-1.5 pr-px">
          <Drop label="Units" value="ml/my" look={UP_BLUE} className="h-full" mark={MARK_BLUE} pad="pl-[3px]" />
        </div>
        <div className="w-[113px] bg-[#9bdbdb] py-0.5 pl-1.5 pr-0.5">
          <Drop label="Mode" value="Regular" look={UP_BLUE} className="h-full" mark={MARK_BLUE} />
        </div>
      </div>

      <div className="flex h-[35px] shrink-0 gap-0.5 border-y-2 border-black bg-black pr-0.5">
        <div className="flex-1 bg-[#53cfb0]" />
        <Nav width="w-[125px]">Combine Tools</Nav>
        <div className="flex w-[359px] items-center bg-[#9bdbdb] py-0.5 pl-[11px] pr-px whitespace-nowrap">
          <span>Merge Tools :</span>
          <Drop label="Merge tools" value="Update Tools Numbers" look={UP_BLUE} className="ml-auto h-full w-[214px]" mark={MARK_BLUE} pad="pl-1" />
        </div>
        <Nav width="w-[52px]">Merge</Nav>
      </div>
      <div className="grid h-[29px] shrink-0 grid-cols-4 gap-0.5 border-b-2 border-x-2 border-black bg-black">
        {["Apply", "Calc Drills", "Update Table", "Close"].map((t) => (
          <div key={t} className="bg-[#53cfb0] p-0.5">
            <button className={`${UP_BLUE} h-[23px] w-full leading-4`}>{t}</button>
          </div>
        ))}
      </div>
    </section>
  );
}

export default function App() {
  return (
    <div className="relative flex min-h-screen flex-col overflow-hidden bg-black text-black">
      <MainHeader />
      <div className="flex min-h-0 flex-1">
        <LeftPanel />
        <Board />
        <RightPanel />
      </div>
      <BottomBars />
      <Histogram />
      <DrillManager />
      <div className="pointer-events-none absolute left-[98px] top-[458px] h-[23px] w-[294px] border-3 border-[#e01010] shadow-[2px_3px_3px_rgba(0,0,0,0.5),inset_2px_3px_3px_rgba(0,0,0,0.4)]" />
      <div className="pointer-events-none absolute left-[462px] top-[397px] h-[36px] w-[669px] border-3 border-[#e01010] shadow-[2px_3px_3px_rgba(0,0,0,0.5),inset_2px_3px_3px_rgba(0,0,0,0.4)]" />
    </div>
  );
}
